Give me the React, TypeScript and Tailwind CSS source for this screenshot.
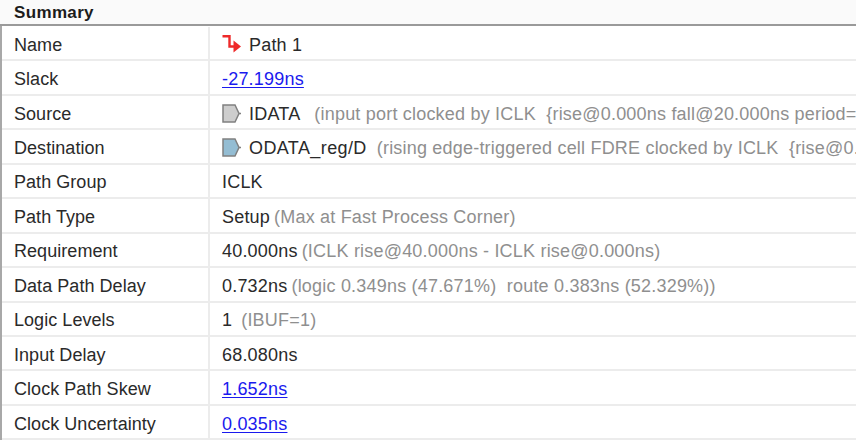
const Pin = ({ fill }: { fill: string }) => (
  <svg width="20" height="20" viewBox="0 0 20 20" className="shrink-0">
    <path d="M1 1H13L17 9.5L13 18H1Z" fill={fill} stroke="#808080" strokeWidth="1.5" />
    <path d="M17 9.5H19" stroke="#808080" strokeWidth="1.5" />
  </svg>
);

const PathIcon = () => (
  <svg width="20" height="20" viewBox="0 0 20 20" className="shrink-0">
    <path d="M0.5 1.2H7.5V11.5H13" fill="none" stroke="#ee2a2a" strokeWidth="2.4" />
    <path d="M11.5 5.5L19 11.5L11.5 17.5Z" fill="#ee2a2a" />
  </svg>
);

const Link = ({ children }: { children: string }) => (
  <span className="text-[#1a1aee] underline underline-offset-2">{children}</span>
);

const Gray = ({ children, className = "" }: { children: string; className?: string }) => (
  <span className={`text-[#8f8f8f] whitespace-pre ${className}`}>{children}</span>
);

const rows: [string, React.ReactNode][] = [
  ["Name", <><span className="mr-[7px]"><PathIcon /></span><span>Path 1</span></>],
  ["Slack", <Link>-27.199ns</Link>],
  ["Source", <><span className="mr-[7px]"><Pin fill="#cdcdcd" /></span><span>IDATA</span><Gray className="ml-[14px]">{"(input port clocked by ICLK  {rise@0.000ns fall@20.000ns period=40.000ns})"}</Gray></>],
  ["Destination", <><span className="mr-[7px]"><Pin fill="#94bdd3" /></span><span className="tracking-[0.4px]">ODATA_reg/D</span><Gray className="ml-[10px]">{"(rising edge-triggered cell FDRE clocked by ICLK  {rise@0.000ns fall@20.000ns})"}</Gray></>],
  ["Path Group", <span>ICLK</span>],
  ["Path Type", <><span>Setup</span><Gray className="ml-[4px]">(Max at Fast Process Corner)</Gray></>],
  ["Requirement", <><span>40.000ns</span><Gray className="ml-[4px]">(ICLK rise@40.000ns - ICLK rise@0.000ns)</Gray></>],
  ["Data Path Delay", <><span>0.732ns</span><Gray className="ml-[4px]">{"(logic 0.349ns (47.671%)  route 0.383ns (52.329%))"}</Gray></>],
  ["Logic Levels", <><span>1</span><Gray className="ml-[9px]">(IBUF=1)</Gray></>],
  ["Input Delay", <span>68.080ns</span>],
  ["Clock Path Skew", <Link>1.652ns</Link>],
  ["Clock Uncertainty", <Link>0.035ns</Link>],
];

export default function App() {
  return (
    <div className="w-[856px] h-[441px] overflow-hidden bg-white text-[18px] leading-[20px] text-[#2a2a2a] font-['Liberation_Sans',Arial,sans-serif]">
      <div className="h-[26px] bg-[#fafafa] border-b-2 border-[#9a9a9a] pl-[14px] pt-px text-[17px] font-bold text-[#1c1c1c] leading-[24px] tracking-[0.35px]">
        Summary
      </div>
      <div className="border-l-2 border-[#a8a8a8] pt-px">
        {rows.map(([label, value]) => (
          <div key={label} className="flex h-[34.45px] border-b-2 border-[#ececec]">
            <div className="w-[208px] shrink-0 pl-[12px] pt-[3px] border-r-2 border-[#ececec] flex items-center tracking-[0.05px]">
              {label}
            </div>
            <div className="flex-1 min-w-0 pl-[12px] pt-[3px] flex items-center whitespace-nowrap overflow-hidden tracking-[0.2px]">
              {value}
            </div>
          </div>
        ))}
      </div>
    </div>
  );
}
